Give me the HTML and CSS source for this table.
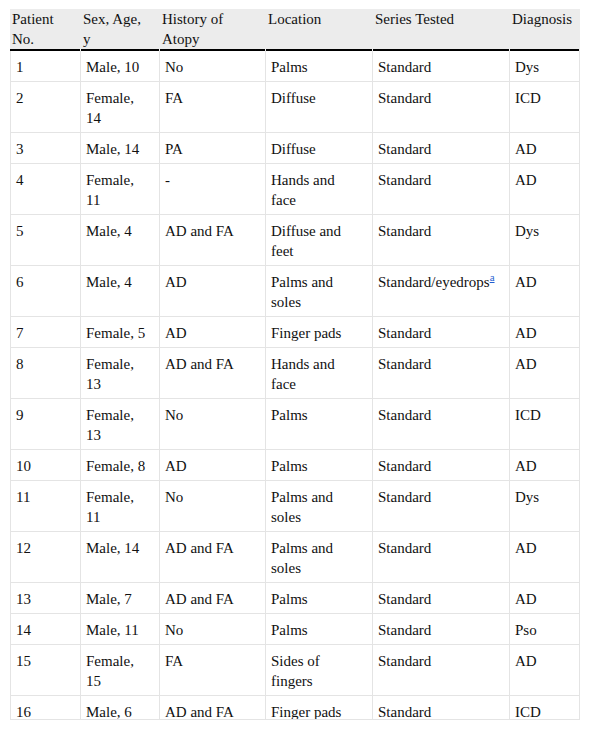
FILE: index.html
```html
<!DOCTYPE html>
<html>
<head>
<meta charset="utf-8">
<link rel="stylesheet" href="styles.css">
</head>
<body>
<div class="frame">
<table class="data">
<thead>
<tr>
<th class="c1">Patient No.</th>
<th class="c2">Sex, Age, y</th>
<th class="c3">History of Atopy</th>
<th class="c4">Location</th>
<th class="c5">Series Tested</th>
<th class="c6">Diagnosis</th>
</tr>
</thead>
<tbody>
<tr><td>1</td><td>Male, 10</td><td>No</td><td>Palms</td><td>Standard</td><td>Dys</td></tr>
<tr><td>2</td><td>Female, 14</td><td>FA</td><td>Diffuse</td><td>Standard</td><td>ICD</td></tr>
<tr><td>3</td><td>Male, 14</td><td>PA</td><td>Diffuse</td><td>Standard</td><td>AD</td></tr>
<tr><td>4</td><td>Female, 11</td><td>-</td><td>Hands and face</td><td>Standard</td><td>AD</td></tr>
<tr><td>5</td><td>Male, 4</td><td>AD and FA</td><td>Diffuse and feet</td><td>Standard</td><td>Dys</td></tr>
<tr><td>6</td><td>Male, 4</td><td>AD</td><td>Palms and soles</td><td>Standard/eyedrops<sup class="note"><a href="#">a</a></sup></td><td>AD</td></tr>
<tr><td>7</td><td>Female, 5</td><td>AD</td><td>Finger pads</td><td>Standard</td><td>AD</td></tr>
<tr><td>8</td><td>Female, 13</td><td>AD and FA</td><td>Hands and face</td><td>Standard</td><td>AD</td></tr>
<tr><td>9</td><td>Female, 13</td><td>No</td><td>Palms</td><td>Standard</td><td>ICD</td></tr>
<tr><td>10</td><td>Female, 8</td><td>AD</td><td>Palms</td><td>Standard</td><td>AD</td></tr>
<tr><td>11</td><td>Female, 11</td><td>No</td><td>Palms and soles</td><td>Standard</td><td>Dys</td></tr>
<tr><td>12</td><td>Male, 14</td><td>AD and FA</td><td>Palms and soles</td><td>Standard</td><td>AD</td></tr>
<tr><td>13</td><td>Male, 7</td><td>AD and FA</td><td>Palms</td><td>Standard</td><td>AD</td></tr>
<tr><td>14</td><td>Male, 11</td><td>No</td><td>Palms</td><td>Standard</td><td>Pso</td></tr>
<tr><td>15</td><td>Female, 15</td><td>FA</td><td>Sides of fingers</td><td>Standard</td><td>AD</td></tr>
<tr><td>16</td><td>Male, 6</td><td>AD and FA</td><td>Finger pads</td><td>Standard</td><td>ICD</td></tr>
</tbody>
</table>
</div>
</body>
</html>
```

FILE: styles.css
```css
html, body {
  margin: 0;
  padding: 0;
  background: #fff;
}

body {
  padding: 9px 0 0 10px;
  font-family: "Liberation Serif", "Times New Roman", serif;
  font-size: 15px;
  line-height: 20px;
  color: #111;
}

.frame {
  width: 570px;
  height: 710px;
  overflow: hidden;
  border-bottom: 1px solid #e4e4e4;
}

.data {
  border-collapse: separate;
  border-spacing: 0;
  table-layout: fixed;
  width: 570px;
}

.data th {
  box-sizing: border-box;
  text-align: left;
  vertical-align: top;
  font-weight: normal;
  padding: 0 10px 2px 2px;
  background:
    linear-gradient(#000, #000) left bottom / calc(100% - 1px) 2px no-repeat,
    #ececec;
}

.data th.c6 {
  padding-right: 0;
}

.c1 { width: 71px; }
.c2 { width: 79px; }
.c3 { width: 106px; }
.c4 { width: 107px; }
.c5 { width: 137px; }
.c6 { width: 70px; }

.data td {
  vertical-align: top;
  padding: 6px 11px 4px 5px;
  border-right: 1px solid #e4e4e4;
  border-bottom: 1px solid #e4e4e4;
}

.data td:first-child {
  border-left: 1px solid #e4e4e4;
}

.note {
  font-size: 11px;
  line-height: 0;
  vertical-align: 6px;
}

.note a {
  color: #1f5fd1;
  text-decoration: underline;
}
```
